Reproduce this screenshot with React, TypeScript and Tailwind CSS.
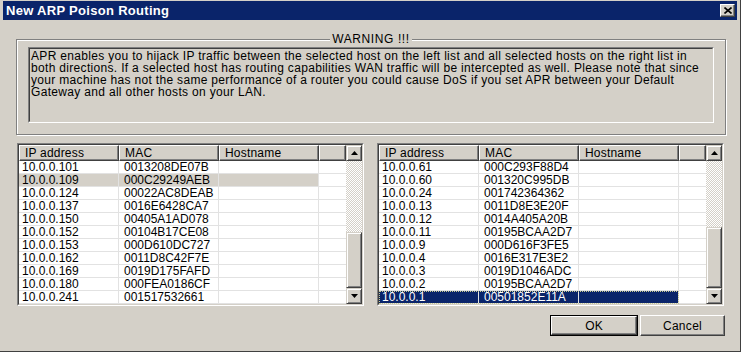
import React from "react";

const leftRows: [string, string][] = [
  ["10.0.0.101", "0013208DE07B"],
  ["10.0.0.109", "000C29249AEB"],
  ["10.0.0.124", "00022AC8DEAB"],
  ["10.0.0.137", "0016E6428CA7"],
  ["10.0.0.150", "00405A1AD078"],
  ["10.0.0.152", "00104B17CE08"],
  ["10.0.0.153", "000D610DC727"],
  ["10.0.0.162", "0011D8C42F7E"],
  ["10.0.0.169", "0019D175FAFD"],
  ["10.0.0.180", "000FEA0186CF"],
  ["10.0.0.241", "001517532661"],
];

const rightRows: [string, string][] = [
  ["10.0.0.61", "000C293F88D4"],
  ["10.0.0.60", "001320C995DB"],
  ["10.0.0.24", "001742364362"],
  ["10.0.0.13", "0011D8E3E20F"],
  ["10.0.0.12", "0014A405A20B"],
  ["10.0.0.11", "00195BCAA2D7"],
  ["10.0.0.9", "000D616F3FE5"],
  ["10.0.0.4", "0016E317E3E2"],
  ["10.0.0.3", "0019D1046ADC"],
  ["10.0.0.2", "00195BCAA2D7"],
  ["10.0.0.1", "00501852E11A"],
];

function Arrow({ up }: { up: boolean }) {
  return (
    <svg width="7" height="4" viewBox="0 0 7 4">
      {up ? (
        <polygon points="3.5,0 7,4 0,4" fill="#000" />
      ) : (
        <polygon points="0,0 7,0 3.5,4" fill="#000" />
      )}
    </svg>
  );
}

function ScrollBtn({ up }: { up: boolean }) {
  return (
    <div className="w-[16px] h-[16px] bg-[#d4d0c8] border-t border-l border-t-[#d4d0c8] border-l-[#d4d0c8] border-b border-r border-b-[#404040] border-r-[#404040] shadow-[inset_1px_1px_0_#ffffff,inset_-1px_-1px_0_#808080] flex items-center justify-center">
      <Arrow up={up} />
    </div>
  );
}

function HeaderCell({ w, label }: { w: string; label: string }) {
  return (
    <div
      className={`${w} h-[16px] bg-[#d4d0c8] border-t border-l border-t-white border-l-white border-b border-r border-b-[#404040] border-r-[#404040] shadow-[inset_-1px_-1px_0_#808080] pl-[5px] text-[12px] leading-[14px] text-black whitespace-nowrap overflow-hidden tracking-[0.2px]`}
    >
      {label}
    </div>
  );
}

function List({
  rows,
  selected,
  focused,
  trackTop,
}: {
  rows: [string, string][];
  selected: number;
  focused: boolean;
  trackTop: string;
}) {
  return (
    <div className="w-[347px] h-[163px] border border-t-[#808080] border-l-[#808080] border-b-white border-r-white">
      <div className="w-full h-full border border-t-[#404040] border-l-[#404040] border-b-[#d4d0c8] border-r-[#d4d0c8] bg-white flex">
        <div className="flex-1 flex flex-col">
          <div className="flex">
            <HeaderCell w="w-[100px]" label="IP address" />
            <HeaderCell w="w-[100px]" label="MAC" />
            <HeaderCell w="w-[100px]" label="Hostname" />
            <HeaderCell w="flex-1" label="" />
          </div>
          {rows.map((r, i) => {
            const sel = i === selected;
            const selCls = sel
              ? focused
                ? "bg-[#0a246a] text-white"
                : "bg-[#d4d0c8] text-black"
              : "text-black";
            return (
              <div key={i} className="flex h-[13px] text-[12px] leading-[12px]">
                <div
                  className={`relative flex w-[300px] ${selCls} ${
                    sel && focused ? "outline-1 outline-dotted outline-[#c8c890] -outline-offset-1" : ""
                  }`}
                >
                  <div className="w-[100px] border-b border-r border-[#e2e2e2] pl-[3px] whitespace-nowrap">
                    {r[0]}
                  </div>
                  <div className="w-[100px] border-b border-r border-[#e2e2e2] pl-[5px] whitespace-nowrap">
                    {r[1]}
                  </div>
                  <div className="w-[100px] border-b border-r border-[#e2e2e2]"></div>
                </div>
                <div className="flex-1 border-b border-[#e2e2e2]"></div>
              </div>
            );
          })}
        </div>
        <div className="w-[16px] flex flex-col">
          <ScrollBtn up={true} />
          <div
            className={`${trackTop} bg-[image:repeating-conic-gradient(#ffffff_0%_25%,#d4d0c8_0%_50%)] bg-[length:2px_2px]`}
          ></div>
          <div className="flex-1 bg-[#d4d0c8] border-t border-l border-t-[#d4d0c8] border-l-[#d4d0c8] border-b border-r border-b-[#404040] border-r-[#404040] shadow-[inset_1px_1px_0_#ffffff,inset_-1px_-1px_0_#808080]"></div>
          <ScrollBtn up={false} />
        </div>
      </div>
    </div>
  );
}

export default function App() {
  return (
    <div className="w-[741px] h-[352px] bg-[#d4d0c8] font-['Liberation_Sans',Arial,sans-serif] overflow-hidden border-r border-b border-r-[#404040] border-b-[#404040] flex flex-col">
      <div className="mx-[3px] mt-[1px] h-[19px] bg-[#0a246a] flex items-center justify-between pl-[3px] pr-[2px]">
        <span className="text-white font-bold text-[13px] leading-[19px] tracking-[0.3px]">
          New ARP Poison Routing
        </span>
        <div className="w-[15px] h-[13px] bg-[#d4d0c8] border-t border-l border-t-white border-l-white border-b border-r border-b-[#404040] border-r-[#404040] shadow-[inset_-1px_-1px_0_#808080] flex items-center justify-center">
          <svg width="8" height="7" viewBox="0 0 8 7">
            <path d="M0.5 0.5 L7.5 6.5 M7.5 0.5 L0.5 6.5" stroke="#000" strokeWidth="1.6" />
          </svg>
        </div>
      </div>

      <div className="ml-[16px] mt-[19px] w-[710px] h-[96px] relative border border-[#808080] shadow-[inset_1px_1px_0_#ffffff,1px_1px_0_#ffffff] pt-[7px] px-[11px]">
        <div className="absolute left-0 right-0 -top-[8px] flex justify-center">
          <span className="bg-[#d4d0c8] px-[2px] text-[12px] leading-[14px] text-black tracking-[0.6px]">WARNING !!!</span>
        </div>
        <div className="h-[76px] border border-t-[#808080] border-l-[#808080] border-b-white border-r-white">
          <div className="h-full border border-t-[#404040] border-l-[#404040] border-b-[#d4d0c8] border-r-[#d4d0c8] pl-[1px] pt-[1px] text-[12px] leading-[12px] text-black whitespace-nowrap tracking-[0.32px]">
            APR enables you to hijack IP traffic between the selected host on the left list and all selected hosts on the right list in
            <br />
            both directions. If a selected host has routing capabilities WAN traffic will be intercepted as well. Please note that since
            <br />
            your machine has not the same performance of a router you could cause DoS if you set APR between your Default
            <br />
            Gateway and all other hosts on your LAN.
          </div>
        </div>
      </div>

      <div className="flex gap-[13px] ml-[17px] mt-[8px]">
        <List rows={leftRows} selected={1} focused={false} trackTop="h-[71px]" />
        <List rows={rightRows} selected={10} focused={true} trackTop="h-[66px]" />
      </div>

      <div className="flex justify-end gap-[2px] mr-[15px] mt-[9px]">
        <div className="w-[88px] h-[21px] border border-black">
          <div className="w-full h-full border-t border-l border-t-white border-l-white border-b border-r border-b-[#404040] border-r-[#404040] shadow-[inset_-1px_-1px_0_#808080] flex items-center justify-center text-[12px] text-black">
            OK
          </div>
        </div>
        <div className="w-[85px] h-[21px] border-t border-l border-t-white border-l-white border-b border-r border-b-[#404040] border-r-[#404040] shadow-[inset_-1px_-1px_0_#808080] flex items-center justify-center text-[12px] text-black tracking-[0.3px]">
          Cancel
        </div>
      </div>
    </div>
  );
}
